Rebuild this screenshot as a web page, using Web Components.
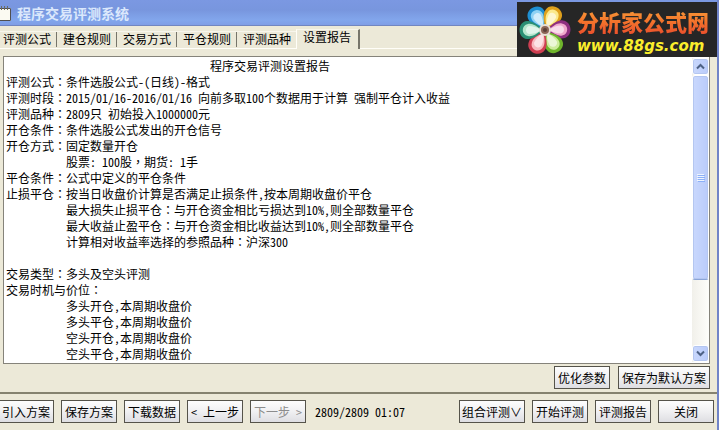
<!DOCTYPE html>
<html lang="zh-CN">
<head>
<meta charset="utf-8">
<title>程序交易评测系统</title>
<style>
  body {
    margin: 0;
    background: #ece9d8;
    color: #000;
    font: 12px/16px "Noto Sans CJK SC", sans-serif;
  }
</style>
</head>
<body>
<trade-window></trade-window>

<script>
// Latin runs take half the width of a Chinese character
function mixed(text) {
  return text.replace(/[\x20-\x7e]+|[：，]/g, (run) => {
    if (/[：，]/.test(run)) return `<span class="mid" lang="zh-TW">${run}</span>`;
    const safe = run.replace(/&/g, "&amp;").replace(/</g, "&lt;").replace(/>/g, "&gt;");
    return `<span class="half">${safe}</span>`;
  });
}

const mixedStyle = `
  .half {
    font: 12px/12px "Noto Sans Mono CJK SC", "Liberation Mono", monospace;
    white-space: pre;
  }
  .mid { font-family: "Noto Sans CJK TC", sans-serif; }
`;

class TitleBar extends HTMLElement {
  constructor() {
    super();
    this.attachShadow({ mode: "open" });
  }

  connectedCallback() {
    this.shadowRoot.innerHTML = `
      <style>
        :host {
          display: flex;
          align-items: center;
          gap: 5px;
          height: 26px;
          box-sizing: border-box;
          border-bottom: 1px solid #7186c0;
          background: linear-gradient(#7b98e2, #7896de 40%, #82a6ec 80%, #7f9ee6);
          color: #dbe8fc;
        }
        svg { display: block; }
        h1 {
          margin: 0;
          font-size: 14px;
          line-height: 20px;
        }
      </style>
      <svg width="12" height="18" viewBox="0 0 12 18" aria-hidden="true">
        <path d="M0 4h11v13H0z" fill="#fbfaf2"/>
        <path d="M0 4.500h10.500v12H0" fill="none" stroke="#505050"/>
        <path d="M1.500 2v4M4.500 2v4M7.500 2v4" stroke="#6c6c60"/>
      </svg>
      <h1><slot></slot></h1>
    `;
  }
}

class TabStrip extends HTMLElement {
  constructor() {
    super();
    this.attachShadow({ mode: "open" });
  }

  connectedCallback() {
    const labels = this.getAttribute("labels").split(",");
    const active = Number(this.getAttribute("active"));
    this.shadowRoot.innerHTML = `
      <style>
        :host { display: block; padding-top: 3px; }
        div {
          display: flex;
          align-items: flex-end;
          height: 20px;
          box-shadow: inset 0 -1px #fffef8;
        }
        button {
          width: 60px;
          height: 18px;
          padding: 0 0 3px;
          border: 0;
          border-top: 1px solid #f8f6ec;
          background: linear-gradient(#77756a, #77756a) 56px 0 / 1px 15px no-repeat;
          color: inherit;
          font: inherit;
          line-height: 14px;
          text-align: left;
          text-indent: 3px;
          white-space: nowrap;
        }
        button.before { background: none; width: 56px; }
        button.active {
          width: 64px;
          height: 20px;
          padding-bottom: 5px;
          border-left: 1px solid #fffef8;
          border-right: 2px solid #77756a;
          background: #ece9d8;
          text-indent: 6px;
        }
      </style>
      <div role="tablist">
        ${labels.map((label, i) => `
          <button role="tab" aria-selected="${i === active}"
            class="${i === active ? "active" : i === active - 1 ? "before" : ""}">${label}</button>
        `).join("")}
      </div>
    `;
  }
}

class ScrollRail extends HTMLElement {
  constructor() {
    super();
    this.attachShadow({ mode: "open" });
  }

  connectedCallback() {
    this.shadowRoot.innerHTML = `
      <style>
        :host {
          display: flex;
          flex-direction: column;
          flex: none;
          width: 17px;
          background: linear-gradient(90deg, #f1f0ea, #fefefb);
        }
        button, .thumb {
          box-sizing: border-box;
          border: 1px solid #fff;
          border-radius: 3px;
          background: linear-gradient(90deg, #c9d8fd, #bacbfa);
          box-shadow: inset 0 0 0 1px #b4c6f0;
        }
        button {
          display: grid;
          place-items: center;
          flex: none;
          height: 17px;
          padding: 0;
        }
        .track { flex: 1; }
        .thumb {
          display: flex;
          flex-direction: column;
          justify-content: center;
          align-items: center;
          gap: 1px;
          height: 76%;
          border-bottom-color: #8ba5d8;
        }
        i {
          width: 7px;
          height: 1px;
          background: #eef4fe;
          box-shadow: 1px 1px #8cb0f8;
        }
      </style>
      <button aria-label="向上滚动"><svg width="9" height="7"><path d="M1 5.500 4.500 2 8 5.500" fill="none" stroke="#4d6185" stroke-width="2"/></svg></button>
      <div class="track"><div class="thumb"><i></i><i></i><i></i><i></i></div></div>
      <button aria-label="向下滚动"><svg width="9" height="7"><path d="M1 1.500 4.500 5 8 1.500" fill="none" stroke="#4d6185" stroke-width="2"/></svg></button>
    `;
  }
}

class SetupReport extends HTMLElement {
  constructor() {
    super();
    this.attachShadow({ mode: "open" });
  }

  connectedCallback() {
    const indent = " ".repeat(10);
    const lines = [
      " ".repeat(34) + "程序交易评测设置报告",
      "评测公式：条件选股公式-(日线)-格式",
      "评测时段：2015/01/16-2016/01/16 向前多取100个数据用于计算 强制平仓计入收益",
      "评测品种：2809只 初始投入1000000元",
      "开仓条件：条件选股公式发出的开仓信号",
      "开仓方式：固定数量开仓",
      indent + "股票: 100股，期货: 1手",
      "平仓条件：公式中定义的平仓条件",
      "止损平仓：按当日收盘价计算是否满足止损条件,按本周期收盘价平仓",
      indent + "最大损失止损平仓：与开仓资金相比亏损达到10%,则全部数量平仓",
      indent + "最大收益止盈平仓：与开仓资金相比收益达到10%,则全部数量平仓",
      indent + "计算相对收益率选择的参照品种：沪深300",
      "",
      "交易类型：多头及空头评测",
      "交易时机与价位：",
      indent + "多头开仓,本周期收盘价",
      indent + "多头平仓,本周期收盘价",
      indent + "空头开仓,本周期收盘价",
      indent + "空头平仓,本周期收盘价",
    ];

    this.shadowRoot.innerHTML = `
      <style>
        ${mixedStyle}
        :host {
          display: flex;
          flex: 1;
          min-height: 0;
          padding: 1px 0 1px 2px;
          border: 1px solid #85837a;
          background: #fff;
        }
        .text {
          flex: 1;
          overflow: hidden;
          white-space: pre;
        }
        p { margin: 0; height: 16px; }
      </style>
      <div class="text">${lines.map((line) => `<p>${mixed(line)}</p>`).join("")}</div>
      <scroll-rail></scroll-rail>
    `;
  }
}

class PushButton extends HTMLElement {
  constructor() {
    super();
    this.attachShadow({ mode: "open" });
  }

  connectedCallback() {
    this.shadowRoot.innerHTML = `
      <style>
        ${mixedStyle}
        :host { display: block; flex: none; }
        button {
          display: block;
          box-sizing: border-box;
          min-width: 56px;
          height: 23px;
          padding: 0 var(--button-pad, 2px);
          border: 1px solid #55534a;
          background: linear-gradient(#fdfdfd, #f0f0f2 50%, #dedee2);
          color: #000;
          font: inherit;
          line-height: 19px;
          white-space: nowrap;
        }
        button:disabled { color: #8c8c8c; }
        :host([cut]) button {
          min-width: 54px;
          padding-right: 3px;
          border-left: 0;
        }
      </style>
      <button ${this.hasAttribute("disabled") ? "disabled" : ""}>${mixed(this.getAttribute("label"))}</button>
    `;
  }
}

class SiteBadge extends HTMLElement {
  constructor() {
    super();
    this.attachShadow({ mode: "open" });
  }

  connectedCallback() {
    const petals = [
      [-30, "#1f8fd2", "#8fd2f4"],
      [28, "#dfa01c", "#fbe98c"],
      [88, "#8e2f80", "#f0a8cc"],
      [148, "#6fb52c", "#cdec9c"],
      [207, "#cf3f52", "#f8b9be"],
      [270, "#2a8f74", "#b5e6cc"],
    ];
    this.shadowRoot.innerHTML = `
      <style>
        :host {
          display: block;
          position: absolute;
          top: 2px;
          right: 0;
        }
        a {
          display: flex;
          align-items: center;
          gap: 6px;
          box-sizing: border-box;
          width: 200px;
          height: 55px;
          padding-left: 2px;
          background: #262626;
          text-decoration: none;
          white-space: nowrap;
        }
        svg { flex: none; }
        b { display: block; }
        .name {
          font-size: 22px;
          font-weight: 900;
          line-height: 32px;
          background: linear-gradient(#f8a83c, #f4752c 50%, #e8482c);
          -webkit-background-clip: text;
          background-clip: text;
          color: transparent;
        }
        .url {
          color: #fbee2c;
          font: italic bold 15px/18px "DejaVu Sans", sans-serif;
        }
      </style>
      <a href="#">
        <svg width="52" height="52" viewBox="-26 -26 52 52" aria-hidden="true">
          ${petals.map(([turn, edge, fill]) => `
            <g transform="rotate(${turn})">
              <path d="M0-2C-4-5-10-13-9-18C-8-28 8-28 9-18C10-13 4-5 0-2Z" fill="${edge}"/>
              <path d="M0-4C-4-8-7-13-6-17C-5-24 5-24 6-17C7-13 4-8 0-4Z" fill="${fill}"/>
              <path d="M0-4C-3-8-4-12-4-16C-3-20 3-20 4-16C4-12 3-8 0-4Z" fill="#fff" opacity=".6"/>
            </g>`).join("")}
          <circle r="6" fill="#e8dfd6"/>
          <circle r="4" fill="#8c6656"/>
          <circle r="2" fill="#5c4038"/>
        </svg>
        <span><b class="name">分析家公式网</b><b class="url">www.88gs.com</b></span>
      </a>
    `;
  }
}

class TradeWindow extends HTMLElement {
  constructor() {
    super();
    this.attachShadow({ mode: "open" });
  }

  connectedCallback() {
    this.shadowRoot.innerHTML = `
      <style>
        ${mixedStyle}
        :host {
          display: flex;
          flex-direction: column;
          position: relative;
          box-sizing: border-box;
          height: 100vh;
          overflow: hidden;
          border-right: 2px solid #7184c8;
        }
        main {
          display: flex;
          flex-direction: column;
          flex: 1;
          min-height: 0;
          padding: 7px 7px 3px 3px;
        }
        .row { display: flex; align-items: center; gap: 7px; }
        .options {
          --button-pad: 3px;
          justify-content: flex-end;
          gap: 8px;
          padding-top: 2px;
        }
        footer {
          padding: 6px 3px 7px 0;
          border-top: 2px solid #85826f;
        }
        .status { flex: 1; padding-left: 2px; }
      </style>
      <title-bar>程序交易评测系统</title-bar>
      <tab-strip labels="评测公式,建仓规则,交易方式,平仓规则,评测品种,设置报告" active="5"></tab-strip>
      <main>
        <setup-report></setup-report>
        <div class="row options">
          <push-button label="优化参数"></push-button>
          <push-button label="保存为默认方案"></push-button>
        </div>
      </main>
      <footer class="row">
        <push-button label="引入方案" cut></push-button>
        <push-button label="保存方案"></push-button>
        <push-button label="下载数据"></push-button>
        <push-button label="< 上一步"></push-button>
        <push-button label="下一步 >" disabled></push-button>
        <div class="status">${mixed("2809/2809 01:07")}</div>
        <push-button label="组合评测∨"></push-button>
        <push-button label="开始评测"></push-button>
        <push-button label="评测报告"></push-button>
        <push-button label="关闭"></push-button>
      </footer>
      <site-badge></site-badge>
    `;
  }
}

customElements.define("title-bar", TitleBar);
customElements.define("tab-strip", TabStrip);
customElements.define("scroll-rail", ScrollRail);
customElements.define("setup-report", SetupReport);
customElements.define("push-button", PushButton);
customElements.define("site-badge", SiteBadge);
customElements.define("trade-window", TradeWindow);
</script>
</body>
</html>
